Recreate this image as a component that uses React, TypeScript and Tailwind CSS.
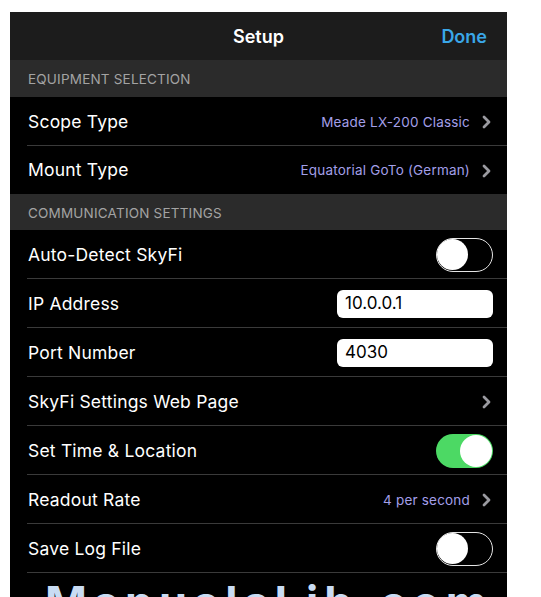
import React from "react";

const Chevron = () => (
  <svg width="9" height="14" viewBox="0 0 9 14" className="shrink-0">
    <path d="M2 2 L7 7 L2 12" fill="none" stroke="#9a9aa0" strokeWidth="2.8" strokeLinecap="round" strokeLinejoin="round" />
  </svg>
);

const Toggle = ({ on }: { on: boolean }) =>
  on ? (
    <div className="w-[57px] h-[34px] rounded-full bg-[#4cd964] relative shrink-0">
      <div className="absolute right-[1px] top-[1px] w-[32px] h-[32px] rounded-full bg-white" />
    </div>
  ) : (
    <div className="w-[57px] h-[34px] rounded-full border-[1.5px] border-[#e5e5e5] bg-black relative shrink-0">
      <div className="absolute left-[0px] top-[0px] w-[31px] h-[31px] rounded-full bg-white" />
    </div>
  );

const Header = ({ title, h }: { title: string; h: string }) => (
  <div className={`${h} bg-[#2b2b2b] flex items-center pl-[18px] pt-[2px] text-[13.5px] text-[#a3a3a3] tracking-[0.2px] uppercase`}>
    {title}
  </div>
);

const Row = ({
  label,
  children,
  sep = true,
  h = "h-[49px]",
}: {
  label: string;
  children?: React.ReactNode;
  sep?: boolean;
  h?: string;
}) => (
  <div className={`${h} flex items-center pl-[18px] pr-[14px] relative`}>
    <div className="text-[17.5px] text-white tracking-[0.2px] flex-1 pt-[1px]">{label}</div>
    <div className="flex items-center">{children}</div>
    {sep && <div className="absolute left-[17px] right-0 bottom-0 h-px bg-[#3a3a3a]" />}
  </div>
);

const Value = ({ text }: { text: string }) => (
  <div className="flex items-center gap-[12px] pr-[2px] pt-[1px]">
    <span className="text-[13.5px] text-[#a39fe8] tracking-[0.2px]">{text}</span>
    <Chevron />
  </div>
);

const Field = ({ text }: { text: string }) => (
  <div className="w-[156px] h-[28px] rounded-[6px] bg-white flex items-center pl-[8px] text-[17px] text-black">
    {text}
  </div>
);

export default function App() {
  return (
    <div
      className="w-[541px] h-[597px] bg-white overflow-hidden pl-[10px] pt-[12px]"
      style={{ fontFamily: "Inter, 'Liberation Sans', sans-serif" }}
    >
      <div className="w-[497px] h-[585px] bg-black overflow-hidden">
        <div className="h-[48px] bg-[#1c1c1c] relative flex items-center justify-center">
          <span className="text-[18px] font-semibold text-white">Setup</span>
          <span className="absolute right-[20px] text-[18px] font-semibold text-[#3aa7e8]">Done</span>
        </div>
        <Header title="Equipment Selection" h="h-[37px]" />
        <Row label="Scope Type">
          <Value text="Meade LX-200 Classic" />
        </Row>
        <Row label="Mount Type" sep={false} h="h-[48px]">
          <Value text="Equatorial GoTo (German)" />
        </Row>
        <Header title="Communication Settings" h="h-[36px]" />
        <Row label="Auto-Detect SkyFi">
          <Toggle on={false} />
        </Row>
        <Row label="IP Address">
          <Field text="10.0.0.1" />
        </Row>
        <Row label="Port Number">
          <Field text="4030" />
        </Row>
        <Row label="SkyFi Settings Web Page">
          <Value text="" />
        </Row>
        <Row label="Set Time & Location">
          <Toggle on={true} />
        </Row>
        <Row label="Readout Rate">
          <Value text="4 per second" />
        </Row>
        <Row label="Save Log File">
          <Toggle on={false} />
        </Row>
        <div className="pl-[35px] pt-[7px] text-[45px] font-bold text-[#c9dcf3] tracking-[6px] leading-none whitespace-nowrap">
          ManualsLib.com
        </div>
      </div>
    </div>
  );
}
